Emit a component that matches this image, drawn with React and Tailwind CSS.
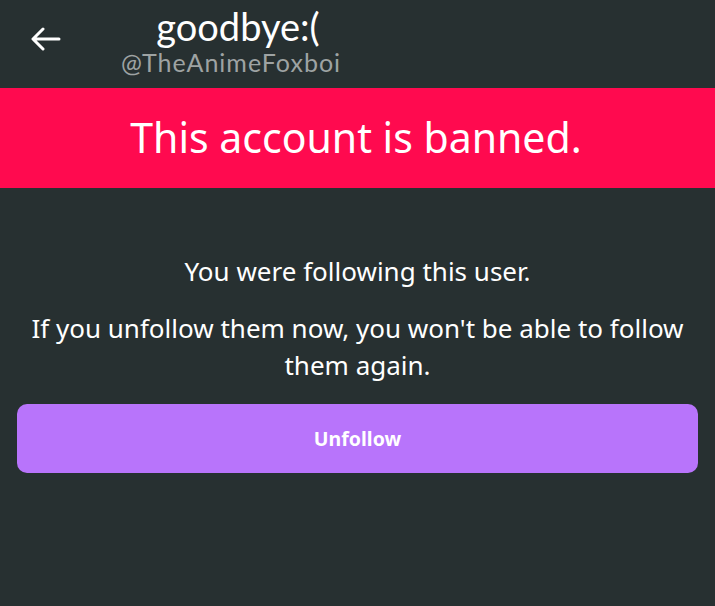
export default function App() {
  return (
    <div className="w-[715px] h-[606px] bg-[#273031] flex flex-col" style={{ fontFamily: "Lato, 'Noto Sans', sans-serif" }}>
      <div className="h-[88px] flex items-start">
        <div className="w-[110px] flex justify-start pl-[31px] pt-[27px]">
          <svg width="30" height="24" viewBox="0 0 30 24" fill="none" stroke="white" strokeWidth="3" strokeLinecap="round" strokeLinejoin="round">
            <path d="M28 12H3M12 2L2 12l10 10" />
          </svg>
        </div>
        <div className="flex flex-col items-center w-[242px] pt-[4px]">
          <div className="text-white text-[38px] leading-[44px] ml-[14px]">goodbye:(</div>
          <div className="text-[#9ea3a3] text-[25px] leading-[28px] tracking-[1px]">@TheAnimeFoxboi</div>
        </div>
      </div>
      <div className="h-[100px] bg-[#ff0a4f] flex items-center justify-center">
        <div className="text-white text-[41px] pb-[1px] pr-[3px]" style={{ fontFamily: "'Noto Sans', Lato, sans-serif", fontWeight: 400 }}>This account is banned.</div>
      </div>
      <div className="flex flex-col items-center text-white text-[26px] pt-[64px]" style={{ fontFamily: "'Noto Sans', Lato, sans-serif" }}>
        <div className="leading-[38px]">You were following this user.</div>
        <div className="mt-[20px] leading-[37px] text-center px-[28px]">If you unfollow them now, you won't be able to follow them again.</div>
      </div>
      <div className="px-[17px] pt-[20px]">
        <button className="w-full h-[69px] rounded-[10px] bg-[#b874fb] text-white font-bold text-[19.5px]" style={{ fontFamily: "'Noto Sans', Lato, sans-serif" }}>Unfollow</button>
      </div>
    </div>
  );
}
